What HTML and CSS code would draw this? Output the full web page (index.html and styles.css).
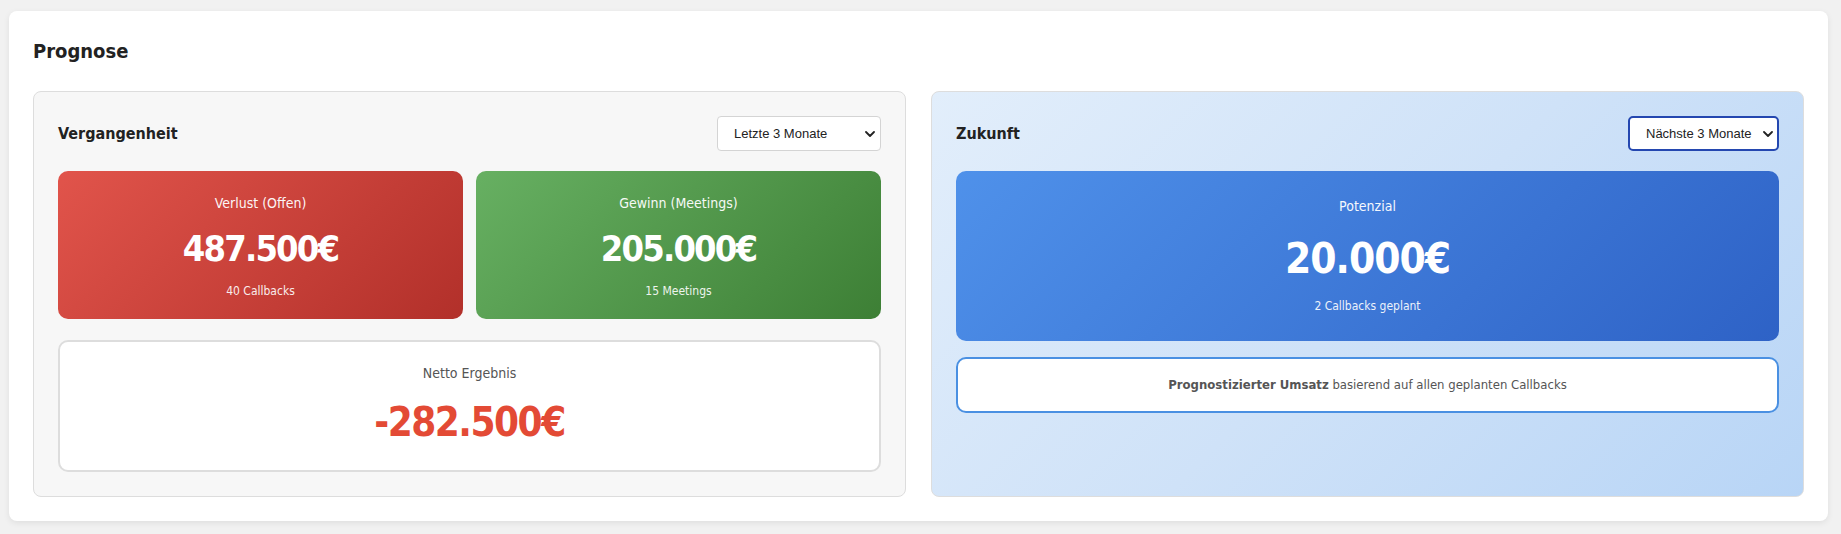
FILE: index.html
```html
<!DOCTYPE html>
<html lang="de">
<head>
    <meta charset="UTF-8">
    <meta name="viewport" content="width=device-width, initial-scale=1.0">
    <title>Prognose</title>
    <link rel="stylesheet" href="styles.css">
</head>
<body>
    <div class="forecast">
        <h2 class="forecast-title">Prognose</h2>

        <div class="panels">
            <div class="panel panel-past">
                <div class="panel-head">
                    <h3>Vergangenheit</h3>
                    <div class="select-wrap">
                        <select class="range-select range-select-past">
                            <option>Letzte 3 Monate</option>
                            <option>Letzte 6 Monate</option>
                            <option>Letzte 12 Monate</option>
                        </select>
                        <svg class="chevron" width="10" height="6" viewBox="0 0 10 6"><path d="M1 1l4 4 4-4" fill="none" stroke="#222" stroke-width="1.8" stroke-linecap="round" stroke-linejoin="round"/></svg>
                    </div>
                </div>

                <div class="stat-row">
                    <div class="stat stat-loss">
                        <div class="stat-label">Verlust (Offen)</div>
                        <div class="stat-value">487.500€</div>
                        <div class="stat-sub">40 Callbacks</div>
                    </div>
                    <div class="stat stat-win">
                        <div class="stat-label">Gewinn (Meetings)</div>
                        <div class="stat-value">205.000€</div>
                        <div class="stat-sub">15 Meetings</div>
                    </div>
                </div>

                <div class="net">
                    <div class="net-label">Netto Ergebnis</div>
                    <div class="net-value">-282.500€</div>
                </div>
            </div>

            <div class="panel panel-future">
                <div class="panel-head">
                    <h3>Zukunft</h3>
                    <div class="select-wrap">
                        <select class="range-select range-select-future">
                            <option>Nächste 3 Monate</option>
                            <option>Nächste 6 Monate</option>
                        </select>
                        <svg class="chevron" width="10" height="6" viewBox="0 0 10 6"><path d="M1 1l4 4 4-4" fill="none" stroke="#222" stroke-width="1.8" stroke-linecap="round" stroke-linejoin="round"/></svg>
                    </div>
                </div>

                <div class="stat stat-potential">
                    <div class="stat-label">Potenzial</div>
                    <div class="stat-value">20.000€</div>
                    <div class="stat-sub">2 Callbacks geplant</div>
                </div>

                <div class="note">
                    <strong>Prognostizierter Umsatz</strong> basierend auf allen geplanten Callbacks
                </div>
            </div>
        </div>
    </div>
</body>
</html>
```

FILE: styles.css
```css
/* Prognose widget */
body {
    font-family: "DejaVu Sans Condensed", "DejaVu Sans", sans-serif;
    margin: 0;
    padding: 11px 13px 13px 9px;
    background-color: #f1f1f1;
    color: #222;
}

.forecast {
    background-color: #fff;
    border-radius: 8px;
    padding: 24px;
    box-shadow: 0 2px 6px rgba(0, 0, 0, 0.08);
}

.forecast-title {
    font-size: 20px;
    line-height: 32px;
    margin: 0 0 24px 0;
    color: #222;
}

.panels {
    display: grid;
    grid-template-columns: 1fr 1fr;
    gap: 25px;
}

.panel {
    border: 1px solid #ddd;
    border-radius: 8px;
    padding: 24px;
}

.panel-past {
    background-color: #f7f7f7;
}

.panel-future {
    background: linear-gradient(135deg, #e2eefb 0%, #cfe2f8 50%, #b8d5f6 100%);
}

.panel-head {
    display: flex;
    justify-content: space-between;
    align-items: center;
    margin-bottom: 20px;
}

.panel-head h3 {
    margin: 0;
    font-size: 16px;
    color: #222;
}

.select-wrap {
    position: relative;
    display: flex;
}

.range-select {
    -webkit-appearance: none;
    appearance: none;
    font-family: "Liberation Sans", Arial, sans-serif;
    font-size: 13px;
    color: #222;
    height: 35px;
    padding: 0 0 0 16px;
    background-color: #fff;
    border: 1px solid #d4d4d4;
    border-radius: 4px;
    outline: none;
}

.range-select-past {
    width: 164px;
}

.range-select-future {
    width: 151px;
    border: 2px solid #2447b0;
    border-radius: 5px;
}

.chevron {
    position: absolute;
    right: 6px;
    top: 15px;
    pointer-events: none;
}

.stat-row {
    display: grid;
    grid-template-columns: 1fr 1fr;
    gap: 13px;
}

.stat {
    border-radius: 10px;
    color: #fff;
    text-align: center;
    line-height: 1.2;
    padding: 24px 20px 21px;
}

.stat-loss {
    background: linear-gradient(135deg, #e1544b 0%, #b2302a 100%);
}

.stat-win {
    background: linear-gradient(135deg, #67b062 0%, #3d7f35 100%);
}

.stat-potential {
    background: linear-gradient(135deg, #4f91ea 0%, #2e62c6 100%);
    padding: 27px 20px 27px;
}

.stat-label {
    font-size: 14px;
    opacity: 0.95;
}

.stat-value {
    font-size: 36px;
    font-weight: bold;
    letter-spacing: -1.8px;
    margin: 15px 0 14px;
}

.stat-potential .stat-value {
    font-size: 42px;
    letter-spacing: -1px;
    margin: 19px 0 15px;
}

.stat-sub {
    font-size: 12px;
    opacity: 0.9;
}

.net {
    margin-top: 21px;
    background-color: #fff;
    border: 2px solid #ddd;
    border-radius: 10px;
    text-align: center;
    line-height: 1.2;
    padding: 23px 20px 24px;
}

.net-label {
    font-size: 14px;
    color: #555;
}

.net-value {
    font-size: 40px;
    font-weight: bold;
    letter-spacing: -1.5px;
    color: #e34a35;
    margin-top: 16px;
}

.note {
    margin-top: 16px;
    background-color: #fff;
    border: 2px solid #4a90e2;
    border-radius: 10px;
    text-align: center;
    font-size: 13px;
    color: #555;
    padding: 18px 20px 19px;
}
```
